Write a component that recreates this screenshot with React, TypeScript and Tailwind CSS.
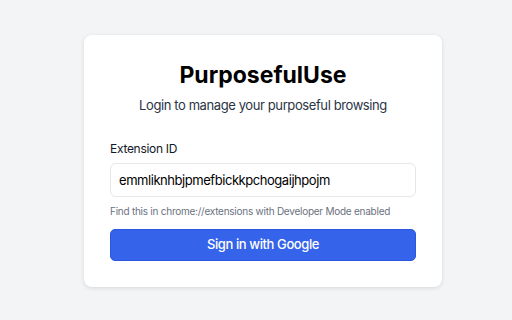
export default function App() {
  return (
    <div
      className="min-h-[320px] w-full bg-[#f3f4f6] flex items-start justify-center pt-[35px] pl-[14px]"
      style={{ fontFamily: 'Inter, "Noto Sans", sans-serif' }}
    >
      <div className="w-[358px] bg-white rounded-[8px] shadow-[0_1px_4px_rgba(0,0,0,0.12)] px-[26px] pt-[26px] pb-[26px]">
        <h1 className="text-center text-[23px] leading-[28px] font-bold text-black">PurposefulUse</h1>
        <p className="text-center text-[13px] leading-[18px] tracking-[-0.4px] text-[#2b3445] mt-[7px]">
          Login to manage your purposeful browsing
        </p>
        <label className="block text-[12px] leading-[16px] tracking-[-0.3px] text-[#111827] mt-[27px]">
          Extension ID
        </label>
        <input
          className="mt-[6px] w-full h-[34px] rounded-[6px] border border-[#e5e7eb] px-[8px] text-[13px] tracking-[-0.45px] text-black outline-none"
          defaultValue="emmliknhbjpmefbickkpchogaijhpojm"
        />
        <p className="text-[10px] leading-[14px] tracking-[-0.25px] text-[#6b7280] mt-[7px]">
          Find this in chrome://extensions with Developer Mode enabled
        </p>
        <button className="mt-[11px] w-full h-[32px] rounded-[5px] bg-[#3563e9] border border-[#2b56dd] text-white text-[13px] tracking-[-0.4px] font-medium">
          Sign in with Google
        </button>
      </div>
    </div>
  );
}
